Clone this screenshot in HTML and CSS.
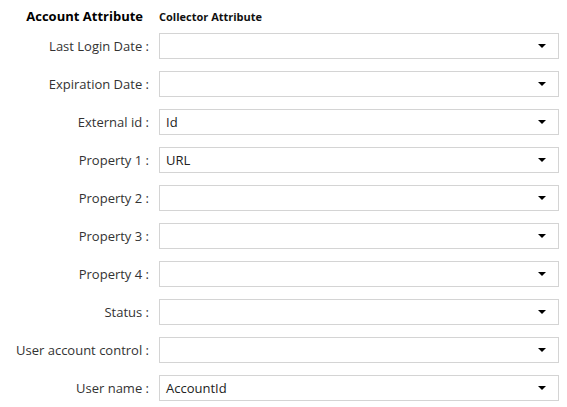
FILE: index.html
```html
<!DOCTYPE html>
<html>
<head>
<meta charset="utf-8">
<link rel="stylesheet" href="styles.css">
</head>
<body>
<div class="form">
  <div class="head">
    <div class="head-label">Account Attribute</div>
    <div class="head-col">Collector Attribute</div>
  </div>
  <div class="row"><label class="lbl">Last Login Date :</label><div class="sel"><span class="val"></span><span class="arrow"></span></div></div>
  <div class="row"><label class="lbl">Expiration Date :</label><div class="sel"><span class="val"></span><span class="arrow"></span></div></div>
  <div class="row"><label class="lbl">External id :</label><div class="sel"><span class="val">Id</span><span class="arrow"></span></div></div>
  <div class="row"><label class="lbl">Property 1 :</label><div class="sel"><span class="val">URL</span><span class="arrow"></span></div></div>
  <div class="row"><label class="lbl">Property 2 :</label><div class="sel"><span class="val"></span><span class="arrow"></span></div></div>
  <div class="row"><label class="lbl">Property 3 :</label><div class="sel"><span class="val"></span><span class="arrow"></span></div></div>
  <div class="row"><label class="lbl">Property 4 :</label><div class="sel"><span class="val"></span><span class="arrow"></span></div></div>
  <div class="row"><label class="lbl">Status :</label><div class="sel"><span class="val"></span><span class="arrow"></span></div></div>
  <div class="row"><label class="lbl">User account control :</label><div class="sel"><span class="val"></span><span class="arrow"></span></div></div>
  <div class="row"><label class="lbl">User name :</label><div class="sel"><span class="val">AccountId</span><span class="arrow"></span></div></div>
</div>
</body>
</html>
```
FILE: styles.css
```css
html, body {
  margin: 0;
  padding: 0;
  background: #fff;
}
body {
  font-family: "Open Sans", "Liberation Sans", sans-serif;
  color: #333;
}
.form {
  display: flex;
  flex-direction: column;
  gap: 12px;
  padding-top: 7px;
}
.head {
  display: grid;
  grid-template-columns: 143px 1fr;
  gap: 16px;
  align-items: baseline;
  height: 14px;
}
.head-label {
  font-size: 13px;
  font-weight: 700;
  color: #000;
  text-align: right;
  line-height: 18px;
}
.head-col {
  font-size: 11px;
  font-weight: 700;
  color: #111;
}
.row {
  display: grid;
  grid-template-columns: 149px 400px;
  gap: 10px;
  align-items: center;
}
.lbl {
  font-size: 13px;
  text-align: right;
  color: #333;
  line-height: 18px;
  margin-top: -1px;
}
.sel {
  height: 26px;
  box-sizing: border-box;
  border: 1px solid #d4d4d4;
  display: flex;
  align-items: center;
  justify-content: space-between;
  padding: 0 12px 0 6px;
  font-size: 13px;
  color: #222;
}
.arrow {
  width: 0;
  height: 0;
  border-left: 4px solid transparent;
  border-right: 4px solid transparent;
  border-top: 4px solid #000;
}
```
